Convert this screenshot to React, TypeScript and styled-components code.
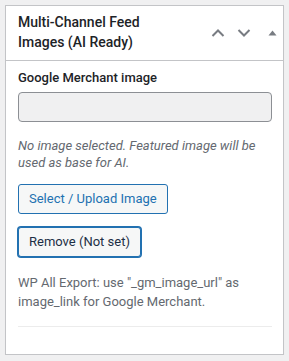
import React from "react";
import styled, { createGlobalStyle } from "styled-components";

const GlobalStyle = createGlobalStyle`
  html, body { margin: 0; padding: 0; background: #f0f0f1; }
  body { font-family: Roboto, "Noto Sans", sans-serif; color: #1d2327; }
  * { box-sizing: border-box; }
`;

const Page = styled.div`
  padding: 5px 5px 0 5px;
  width: 289px;
`;

const Postbox = styled.div`
  width: 279px;
  height: 350px;
  background: #fff;
  border: 1px solid #c3c4c7;
  box-shadow: 0 1px 1px rgba(0, 0, 0, 0.04);
  display: flex;
  flex-direction: column;
`;

const Header = styled.div`
  display: flex;
  align-items: center;
  height: 55px;
  border-bottom: 1px solid #c3c4c7;
`;

const Title = styled.h2`
  flex: 1;
  margin: 0;
  padding: 0 20px 0 12px;
  font-size: 14px;
  font-weight: 500;
  line-height: 19.6px;
  color: #1d2327;
`;

const Handles = styled.div`
  display: flex;
  align-items: center;
  height: 100%;
`;

const HandleButton = styled.button<{ $shift?: number }>`
  width: 26px;
  height: 36px;
  padding: 0 0 0 ${(p) => p.$shift ?? 0}px;
  margin: 0;
  border: 0;
  background: transparent;
  display: flex;
  align-items: center;
  justify-content: center;
  color: #787c82;
  cursor: pointer;
`;

const Inside = styled.div`
  padding: 7px 12px 0 12px;
  display: flex;
  flex-direction: column;
  align-items: flex-start;
  flex: 1;
`;

const Label = styled.div`
  font-size: 13px;
  font-weight: 500;
  line-height: 19.5px;
  color: #1d2327;
`;

const Field = styled.input`
  margin-top: 4px;
  width: 254px;
  height: 30px;
  border: 1px solid #8c8f94;
  border-radius: 4px;
  background: #f0f0f1;
  padding: 0 8px;
  font: inherit;
`;

const Description = styled.p`
  margin: 15px 0 0 0;
  font-size: 13px;
  font-style: italic;
  line-height: 17px;
  color: #646970;
`;

const Button = styled.button<{ $focused?: boolean; $gap: number }>`
  margin-top: ${(p) => p.$gap}px;
  height: 30px;
  padding: 0 10px;
  border: 1px solid #2271b1;
  border-radius: 3px;
  background: #f6f7f7;
  font-family: Roboto, "Noto Sans", sans-serif;
  font-size: 13px;
  line-height: 28px;
  color: ${(p) => (p.$focused ? "#1d2f45" : "#2271b1")};
  box-shadow: ${(p) => (p.$focused ? "0 0 0 1px #2271b1" : "none")};
  cursor: pointer;
  white-space: nowrap;
`;

const Note = styled.p`
  margin: 16px 0 0 0;
  font-size: 13px;
  line-height: 19.5px;
  color: #646970;
`;

const Separator = styled.hr`
  margin: 14px 0 0 0;
  width: 254px;
  border: 0;
  border-top: 1px solid #ececec;
`;

const Chevron = ({ up }: { up?: boolean }) => (
  <svg width="14" height="8" viewBox="0 0 14 8" aria-hidden="true">
    <path
      d={up ? "M1.5 7 L7 1.5 L12.5 7" : "M1.5 1 L7 6.5 L12.5 1"}
      fill="none"
      stroke="currentColor"
      strokeWidth="2"
    />
  </svg>
);

const Triangle = () => (
  <svg width="9" height="6" viewBox="0 0 9 6" aria-hidden="true">
    <path d="M0.5 5.5 L4.5 0.5 L8.5 5.5 Z" fill="currentColor" />
  </svg>
);

export default function App() {
  return (
    <>
      <GlobalStyle />
      <Page>
        <Postbox>
          <Header>
            <Title>Multi-Channel Feed Images (AI Ready)</Title>
            <Handles>
              <HandleButton aria-label="Move up">
                <Chevron up />
              </HandleButton>
              <HandleButton aria-label="Move down">
                <Chevron />
              </HandleButton>
              <HandleButton aria-label="Toggle panel" $shift={4}>
                <Triangle />
              </HandleButton>
            </Handles>
          </Header>
          <Inside>
            <Label>Google Merchant image</Label>
            <Field type="text" readOnly value="" />
            <Description>
              No image selected. Featured image will be used as base for AI.
            </Description>
            <Button $gap={13}>Select / Upload Image</Button>
            <Button $gap={13} $focused>
              Remove (Not set)
            </Button>
            <Note>
              WP All Export: use "_gm_image_url" as image_link for Google Merchant.
            </Note>
            <Separator />
          </Inside>
        </Postbox>
      </Page>
    </>
  );
}
